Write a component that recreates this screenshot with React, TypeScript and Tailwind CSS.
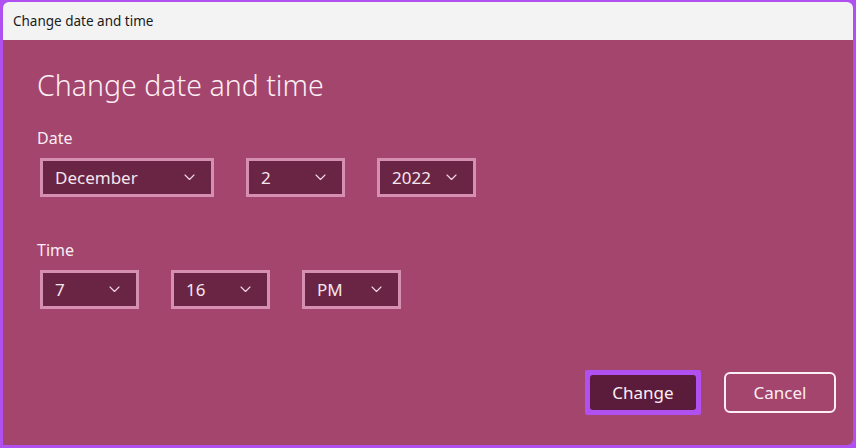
import React from 'react';

const FONT = { fontFamily: '"Noto Sans", "Open Sans", sans-serif' };

function Chevron() {
  return (
    <svg width="11" height="7" viewBox="0 0 11 7" fill="none" className="shrink-0">
      <path d="M1 1 L5.5 5.5 L10 1" stroke="#f3dbe6" strokeWidth="1.1" strokeLinecap="round" strokeLinejoin="round" />
    </svg>
  );
}

function Select({ value, width }: { value: string; width: string }) {
  return (
    <div className={`flex h-[39px] items-center justify-between border-[3px] border-[#d68fb1] bg-[#6b2544] pl-[12px] pr-[16px] ${width}`}>
      <span className="text-[17px] text-[#f5e6ee]">{value}</span>
      <Chevron />
    </div>
  );
}

export default function App() {
  return (
    <div className="flex h-[448px] w-[856px] flex-col bg-[#b050f0] px-[3px] pb-[3px] pt-[2px]" style={FONT}>
      <div className="flex h-[38px] shrink-0 items-center rounded-tl-[6px] rounded-tr-[6px] bg-[#f3f3f3] pl-[10px]">
        <span className="text-[13.5px] text-[#1a1a1a]">Change date and time</span>
      </div>
      <div className="flex flex-1 flex-col rounded-br-[6px] bg-[#a3456d] pl-[34px] pr-[17px]">
        <h1 className="mt-[25px] text-[28.5px] font-light leading-[40px] text-[#fbeef4]">Change date and time</h1>
        <div className="mt-[22px] text-[16px] leading-[22px] text-[#fbeef4]">Date</div>
        <div className="mt-[9px] ml-[3px] flex gap-[32px]">
          <Select value="December" width="w-[174px]" />
          <Select value="2" width="w-[99px]" />
          <Select value="2022" width="w-[99px]" />
        </div>
        <div className="mt-[42px] text-[16px] leading-[22px] text-[#fbeef4]">Time</div>
        <div className="mt-[9px] ml-[3px] flex gap-[32px]">
          <Select value="7" width="w-[99px]" />
          <Select value="16" width="w-[99px]" />
          <Select value="PM" width="w-[99px]" />
        </div>
        <div className="mt-auto mb-[30px] flex items-center justify-end gap-[23px]">
          <div className="rounded-[2px] bg-[#b050f0] p-[5px]">
            <div className="flex h-[35px] w-[106px] items-center justify-center rounded-[3px] bg-[#5b1b3b] text-[17px] text-[#fbeef4]">Change</div>
          </div>
          <div className="flex h-[41px] w-[112px] items-center justify-center rounded-[6px] border-2 border-[#fbeef4] text-[17px] text-[#fbeef4]">Cancel</div>
        </div>
      </div>
    </div>
  );
}
